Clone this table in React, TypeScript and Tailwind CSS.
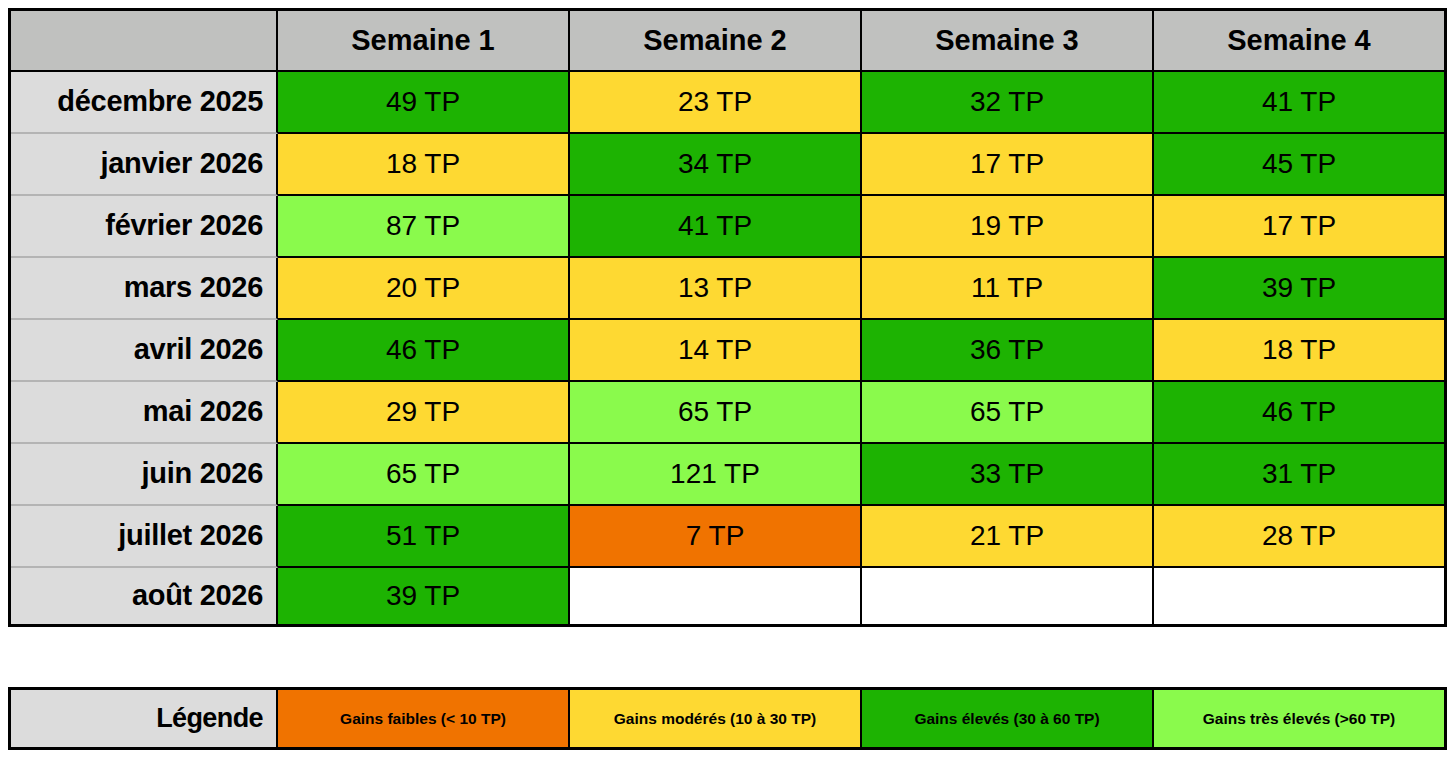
import React from "react";

type C = "G" | "Y" | "L" | "O" | "E";

const bg: Record<C, string> = {
  G: "bg-[#1db302]",
  Y: "bg-[#fed932]",
  L: "bg-[#8afa4c]",
  O: "bg-[#f07300]",
  E: "bg-white",
};

const rows: { label: string; cells: [string, C][] }[] = [
  { label: "décembre 2025", cells: [["49 TP", "G"], ["23 TP", "Y"], ["32 TP", "G"], ["41 TP", "G"]] },
  { label: "janvier 2026", cells: [["18 TP", "Y"], ["34 TP", "G"], ["17 TP", "Y"], ["45 TP", "G"]] },
  { label: "février 2026", cells: [["87 TP", "L"], ["41 TP", "G"], ["19 TP", "Y"], ["17 TP", "Y"]] },
  { label: "mars 2026", cells: [["20 TP", "Y"], ["13 TP", "Y"], ["11 TP", "Y"], ["39 TP", "G"]] },
  { label: "avril 2026", cells: [["46 TP", "G"], ["14 TP", "Y"], ["36 TP", "G"], ["18 TP", "Y"]] },
  { label: "mai 2026", cells: [["29 TP", "Y"], ["65 TP", "L"], ["65 TP", "L"], ["46 TP", "G"]] },
  { label: "juin 2026", cells: [["65 TP", "L"], ["121 TP", "L"], ["33 TP", "G"], ["31 TP", "G"]] },
  { label: "juillet 2026", cells: [["51 TP", "G"], ["7 TP", "O"], ["21 TP", "Y"], ["28 TP", "Y"]] },
  { label: "août 2026", cells: [["39 TP", "G"], ["", "E"], ["", "E"], ["", "E"]] },
];

const legend: [string, C][] = [
  ["Gains faibles (< 10 TP)", "O"],
  ["Gains modérés (10 à 30 TP)", "Y"],
  ["Gains élevés (30 à 60 TP)", "G"],
  ["Gains très élevés (>60 TP)", "L"],
];

export default function App() {
  const font = { fontFamily: '"Liberation Sans", Arial, Helvetica, sans-serif' };
  return (
    <div className="w-[1456px] h-[758px] bg-white text-black pt-[8px] pl-[8px]" style={font}>
      <div className="w-[1439px] border-[3px] border-black grid grid-cols-[267px_292px_292px_292px_290px] grid-rows-[61px_repeat(8,62px)_56px]">
        <div className="bg-[#c0c1bf] border-r-2 border-b-2 border-black" />
        {["Semaine 1", "Semaine 2", "Semaine 3", "Semaine 4"].map((s, i) => (
          <div
            key={s}
            className={`bg-[#c0c1bf] border-b-2 border-black flex items-center justify-center font-bold text-[29px] ${i < 3 ? "border-r-2" : ""}`}
          >
            {s}
          </div>
        ))}
        {rows.map((r, ri) => {
          const last = ri === rows.length - 1;
          return (
            <React.Fragment key={r.label}>
              <div
                className={`bg-[#dcdcdc] border-r-2 border-r-black flex items-center justify-end pr-[13px] font-bold text-[29px] tracking-[-0.3px] ${last ? "" : "border-b-2 border-b-[#b4b4b4]"}`}
              >
                {r.label}
              </div>
              {r.cells.map(([t, c], ci) => (
                <div
                  key={ci}
                  className={`${bg[c]} flex items-center justify-center text-[28px] ${ci < 3 ? "border-r-2 border-r-black" : ""} ${last ? "" : "border-b-2 border-b-black"}`}
                >
                  {t}
                </div>
              ))}
            </React.Fragment>
          );
        })}
      </div>

      <div className="mt-[60px] w-[1439px] h-[63px] border-[3px] border-black grid grid-cols-[267px_292px_292px_292px_290px]">
        <div className="bg-[#dcdcdc] border-r-2 border-black flex items-center justify-end pr-[13px] font-bold text-[27px] tracking-[-0.6px]">
          Légende
        </div>
        {legend.map(([t, c], i) => (
          <div
            key={t}
            className={`${bg[c]} flex items-center justify-center font-bold text-[15.5px] ${i < 3 ? "border-r-2 border-black" : ""}`}
          >
            {t}
          </div>
        ))}
      </div>
    </div>
  );
}
